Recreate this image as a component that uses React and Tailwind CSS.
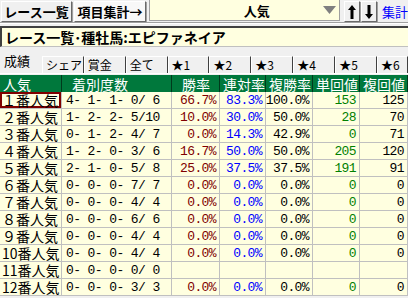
import React from "react";

const JP = "font-['MS_Gothic','Noto_Sans_CJK_JP',sans-serif]";
const MONO = "font-['Liberation_Mono','DejaVu_Sans_Mono',monospace]";

const Z = ["0.0%", "0.0%", "0.0%", "0", "0"];
const rows = [
  ["１番人気", "4- 1- 1- 0/ 6", "66.7%", "83.3%", "100.0%", "153", "125"],
  ["２番人気", "1- 2- 2- 5/10", "10.0%", "30.0%", "50.0%", "28", "70"],
  ["３番人気", "0- 1- 2- 4/ 7", "0.0%", "14.3%", "42.9%", "0", "71"],
  ["４番人気", "1- 2- 0- 3/ 6", "16.7%", "50.0%", "50.0%", "205", "120"],
  ["５番人気", "2- 1- 0- 5/ 8", "25.0%", "37.5%", "37.5%", "191", "91"],
  ["６番人気", "0- 0- 0- 7/ 7", ...Z],
  ["７番人気", "0- 0- 0- 4/ 4", ...Z],
  ["８番人気", "0- 0- 0- 6/ 6", ...Z],
  ["９番人気", "0- 0- 0- 4/ 4", ...Z],
  ["10番人気", "0- 0- 0- 4/ 4", ...Z],
  ["11番人気", "0- 0- 0- 0/ 0", "", "", "", "", ""],
  ["12番人気", "0- 0- 0- 3/ 3", ...Z],
];

const tabs = ["シェア", "賞金", "全て", "★1", "★2", "★3", "★4", "★5", "★6"];
const headers = ["人気", "着別度数", "勝率", "連対率", "複勝率", "単回値", "複回値"];
const colColors = ["text-[#800000]", "text-[#0000ff]", "text-black", "text-[#008000]", "text-black"];

function Btn({ children, className = "" }) {
  return (
    <div
      className={`flex items-center justify-center h-[21px] leading-none border border-t-white border-l-white border-r-[#696969] border-b-[#696969] shadow-[1px_1px_0_#a0a0a0] bg-[#f0f0f0] ${className}`}
    >
      {children}
    </div>
  );
}

function Arrow({ up }) {
  return (
    <svg width="8" height="14" viewBox="0 0 8 14">
      <g transform={up ? "" : "rotate(180 4 7)"}>
        <polygon points="4,0 8,5 5.5,5 5.5,14 2.5,14 2.5,5 0,5" fill="#000" />
      </g>
    </svg>
  );
}

export default function App() {
  return (
    <div className={`w-[408px] h-[298px] overflow-hidden bg-[#f0f0f0] text-black ${JP}`}>
      {/* top bar */}
      <div className="flex items-start h-[22px] pt-[1px] pl-[1px]">
        <Btn className="w-[72px] text-[13px] font-bold">レース一覧</Btn>
        <Btn className="w-[73px] ml-[2px] text-[13px] font-bold bg-[#f8f8f8]">項目集計→</Btn>
        <div className="ml-[3px] w-[194px] h-[21px] -mt-[1px] bg-[#ffffe0] border border-[#a0a0a0] border-t-0 flex items-center">
          <div className="flex-1 text-center text-[13px] font-bold pl-[40px] leading-none">人気</div>
          <svg width="13" height="8" viewBox="0 0 13 8" className="mr-[3px]">
            <polygon points="0,0 13,0 6.5,8" fill="#808080" />
          </svg>
        </div>
        <Btn className="ml-[4px] w-[16px]">
          <Arrow up />
        </Btn>
        <Btn className="ml-[1px] w-[16px]">
          <Arrow />
        </Btn>
        <div className="ml-[5px] h-[21px] flex items-center text-[13px] text-[#0000ff] whitespace-nowrap leading-none">集計</div>
      </div>
      <div className="h-[1px] bg-[#a0a0a0]" />
      <div className="h-[1px] bg-white" />
      {/* title */}
      <div className="mt-[2px] h-[21px] bg-[#ffffe0] border-t-2 border-l-2 border-t-[#404040] border-l-[#404040] border-b border-b-[#c0c0c0] flex items-center pl-[3px]">
        <span className="text-[14px] font-bold whitespace-nowrap leading-none">レース一覧･種牡馬:エピファネイア</span>
      </div>
      {/* tabs */}
      <div className="mt-[4px] h-[23px] flex items-end border-b border-b-white">
        <div className="w-[42px] h-[22px] pl-[4px] pt-[3px] text-[13px] leading-none">成績</div>
        {tabs.map((t, i) => (
          <div
            key={t}
            className={`${i === tabs.length - 1 ? "w-[31px]" : "w-[42px]"} h-[17px] border-l border-t border-l-white border-t-white border-r border-r-[#404040] pl-[3px] pt-[2px] text-[12px] leading-none whitespace-nowrap`}
          >
            {t}
          </div>
        ))}
      </div>
      {/* table */}
      <div className="grid grid-cols-[62px_110px_48px_46px_47px_47px_48px] bg-[#ffffe0] text-[14px] mt-[1px]">
        {headers.map((h, i) => (
          <div
            key={i}
            className={`h-[17px] bg-[#00783c] text-white border-r border-r-[#003a1c] flex items-center whitespace-nowrap leading-none ${i === 1 || i === 2 ? "pl-[10px]" : "pl-[3px]"}`}
          >
            {h}
          </div>
        ))}
        {rows.map((r, ri) => (
          <React.Fragment key={ri}>
            <div
              className={`h-[17px] border-r border-b border-[#c0c0c0] flex items-center pl-[2px] whitespace-nowrap leading-none ${ri === 0 ? "shadow-[inset_0_0_0_2px_#800000]" : ""}`}
            >
              {r[0]}
            </div>
            <div className={`h-[17px] border-r border-b border-[#c0c0c0] flex items-center pl-[4px] whitespace-pre text-[13px] tracking-[-0.6px] leading-none ${MONO}`}>
              {r[1]}
            </div>
            {r.slice(2).map((v, ci) => (
              <div
                key={ci}
                className={`h-[17px] border-r border-b border-[#c0c0c0] flex items-center justify-end pr-[3px] whitespace-pre text-[13px] tracking-[-0.6px] leading-none ${MONO} ${colColors[ci]}`}
              >
                {v}
              </div>
            ))}
          </React.Fragment>
        ))}
      </div>
    </div>
  );
}
